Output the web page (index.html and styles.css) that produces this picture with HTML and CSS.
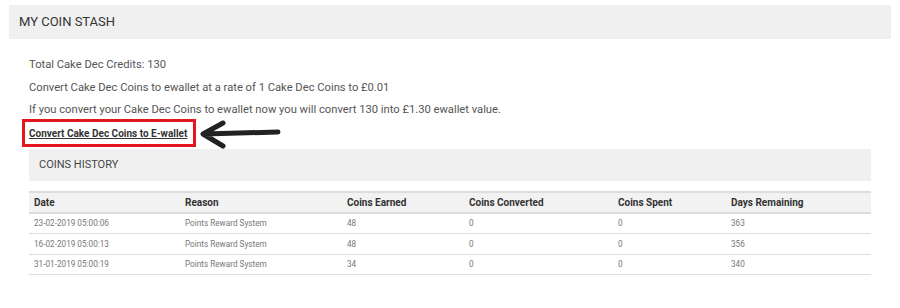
FILE: index.html
```html
<!DOCTYPE html>
<html lang="en">
<head>
  <meta charset="UTF-8"/>
  <title>My Coin Stash</title>
  <link rel="stylesheet" href="styles.css">
</head>
<body>

<div class="panel">
  <div class="panel-heading">MY COIN STASH</div>
  <div class="panel-body">
    <p>Total Cake Dec Credits: 130</p>
    <p>Convert Cake Dec Coins to ewallet at a rate of 1 Cake Dec Coins to £0.01</p>
    <p>If you convert your Cake Dec Coins to ewallet now you will convert 130 into £1.30 ewallet value.</p>

    <div class="convert-row">
      <span class="highlight"><a href="#" class="convert-link">Convert Cake Dec Coins to E-wallet</a></span>
      <svg class="arrow" width="86" height="32" viewBox="0 0 86 32">
        <path d="M80 14 L6 16 M25 5 L5 16 L25 28" fill="none" stroke="#222" stroke-width="5" stroke-linecap="round" stroke-linejoin="round"/>
      </svg>
    </div>

    <div class="sub-heading">COINS HISTORY</div>

    <table class="history">
      <thead>
        <tr>
          <th class="c-date">Date</th>
          <th class="c-reason">Reason</th>
          <th class="c-earned">Coins Earned</th>
          <th class="c-converted">Coins Converted</th>
          <th class="c-spent">Coins Spent</th>
          <th>Days Remaining</th>
        </tr>
      </thead>
      <tbody>
        <tr>
          <td>23-02-2019 05:00:06</td>
          <td>Points Reward System</td>
          <td>48</td>
          <td>0</td>
          <td>0</td>
          <td>363</td>
        </tr>
        <tr>
          <td>16-02-2019 05:00:13</td>
          <td>Points Reward System</td>
          <td>48</td>
          <td>0</td>
          <td>0</td>
          <td>356</td>
        </tr>
        <tr>
          <td>31-01-2019 05:00:19</td>
          <td>Points Reward System</td>
          <td>34</td>
          <td>0</td>
          <td>0</td>
          <td>340</td>
        </tr>
      </tbody>
    </table>
  </div>
</div>

</body>
</html>
```

FILE: styles.css
```css
body {
  font-family: Roboto, "Liberation Sans", sans-serif;
  background: #fff;
  margin: 0;
  padding: 5px 0 0 9px;
  color: #444;
}
.panel {
  width: 882px;
}
.panel-heading {
  background: #f0f0f0;
  height: 34px;
  line-height: 34px;
  padding-left: 10px;
  font-size: 13px;
  color: #333;
}
.panel-body {
  padding: 15px 20px 0;
}
p {
  margin: 0;
  font-size: 11.2px;
  line-height: 22.5px;
  color: #555;
}
.convert-row {
  display: flex;
  align-items: center;
  height: 22px;
}
.highlight {
  display: inline-block;
  border: 3px solid #e3171f;
  padding: 0 6px 0 4px;
  margin-left: -7px;
  line-height: 20px;
}
.convert-link {
  font-size: 10px;
  font-weight: bold;
  color: #333;
  text-decoration: underline;
}
.arrow {
  margin-left: 2px;
  margin-top: 2px;
}
.sub-heading {
  margin-top: 5px;
  background: #f0f0f0;
  height: 32px;
  line-height: 32px;
  padding-left: 10px;
  font-size: 11px;
  color: #444;
}
.history {
  margin-top: 10px;
  width: 100%;
  border-collapse: collapse;
  font-size: 8.2px;
}
.history th {
  background: #f2f2f2;
  border-top: 2px solid #ddd;
  border-bottom: 2px solid #ddd;
  text-align: left;
  font-size: 10px;
  font-weight: bold;
  color: #333;
  height: 19px;
  padding: 0 5px;
}
.history td {
  border-bottom: 1px solid #ddd;
  height: 19.5px;
  padding: 0 5px;
  color: #777;
}
.c-date { width: 141px; }
.c-reason { width: 152px; }
.c-earned { width: 112px; }
.c-converted { width: 139px; }
.c-spent { width: 103px; }
```
